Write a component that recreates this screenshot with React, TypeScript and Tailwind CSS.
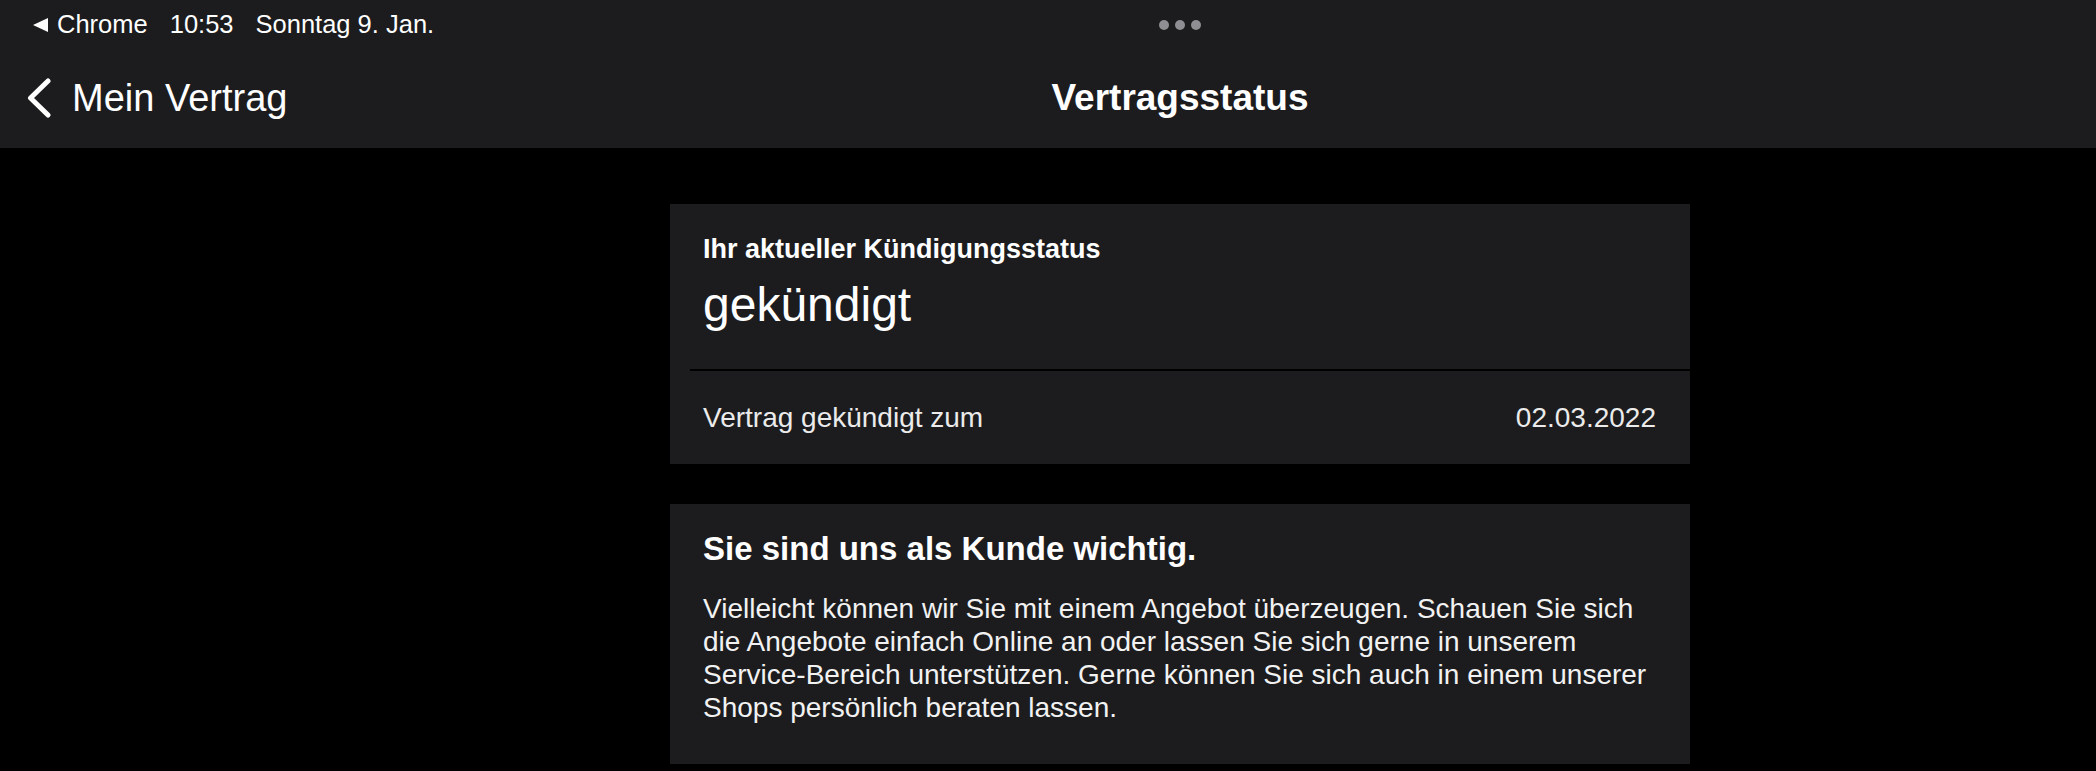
const font = { fontFamily: '"Liberation Sans", Arial, sans-serif' };

function StatusBar() {
  return (
    <div className="grid grid-cols-[264px_1fr] h-[48px]">
      <div className="flex w-max items-start pt-[9px] pl-[33px] whitespace-nowrap text-[25.5px] leading-[30px] text-white">
        <div className="flex items-center gap-[9px]">
          <svg width="15" height="14" viewBox="0 0 15 14" className="mt-[1px] shrink-0">
            <path d="M0 7 L15 0 L15 14 Z" fill="white" />
          </svg>
          <span>Chrome</span>
        </div>
        <span className="ml-[22px]">10:53</span>
        <span className="ml-[22px]">Sonntag 9. Jan.</span>
      </div>
      <div className="flex justify-center pt-[20px]">
        <div className="flex gap-[6px]">
          <span className="w-[10px] h-[10px] rounded-full bg-[#8e8e93]" />
          <span className="w-[10px] h-[10px] rounded-full bg-[#8e8e93]" />
          <span className="w-[10px] h-[10px] rounded-full bg-[#8e8e93]" />
        </div>
      </div>
    </div>
  );
}

function NavBar() {
  return (
    <div className="grid grid-cols-[264px_1fr] h-[100px] items-center">
      <button className="flex w-max items-center gap-[21px] pl-[27px] whitespace-nowrap text-white">
        <svg width="24" height="40" viewBox="0 0 24 40" fill="none" className="shrink-0">
          <path d="M21 3 L3.5 20 L21 37" stroke="white" strokeWidth="5" strokeLinecap="round" strokeLinejoin="round" />
        </svg>
        <span className="text-[38px] leading-[44px]">Mein Vertrag</span>
      </button>
      <h1 className="text-center text-[37px] leading-[44px] font-bold text-white">Vertragsstatus</h1>
    </div>
  );
}

export default function App() {
  return (
    <div className="min-h-screen bg-black" style={font}>
      <header className="bg-[#1c1c1e]">
        <StatusBar />
        <NavBar />
      </header>

      <main className="pl-[264px] pb-[7px]">
        <div className="mx-auto w-[1020px]">
          {/* Kündigungsstatus */}
          <section className="mt-[56px] bg-[#1c1c1e]">
            <div className="pt-[29px] pb-[36px] px-[33px]">
              <p className="text-[27px] leading-[32px] font-bold text-white">Ihr aktueller Kündigungsstatus</p>
              <p className="mt-[12px] text-[48px] leading-[56px] text-white">gekündigt</p>
            </div>
            <div className="ml-[20px] h-[2px] bg-black" />
            <div className="flex h-[93px] items-center justify-between pl-[33px] pr-[34px] text-[28px] leading-[32px] text-[#ebebeb]">
              <span>Vertrag gekündigt zum</span>
              <span>02.03.2022</span>
            </div>
          </section>

          {/* Angebot */}
          <section className="mt-[40px] bg-[#1c1c1e] pt-[25px] pb-[40px] px-[33px]">
            <h2 className="text-[33px] leading-[40px] font-bold text-white">Sie sind uns als Kunde wichtig.</h2>
            <p className="mt-[23px] text-[28px] leading-[33px] text-[#f2f2f2]">
              Vielleicht können wir Sie mit einem Angebot überzeugen. Schauen Sie sich die Angebote einfach Online an
              oder lassen Sie sich gerne in unserem Service-Bereich unterstützen. Gerne können Sie sich auch in einem
              unserer Shops persönlich beraten lassen.
            </p>
          </section>
        </div>
      </main>
    </div>
  );
}
